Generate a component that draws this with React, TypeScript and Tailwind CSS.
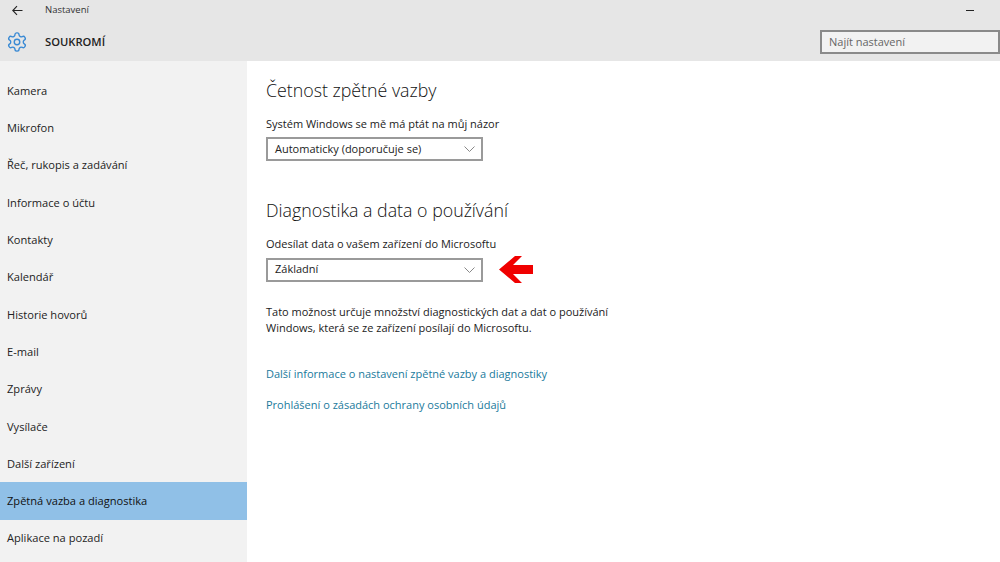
const menu = [
  "Kamera",
  "Mikrofon",
  "Řeč, rukopis a zadávání",
  "Informace o účtu",
  "Kontakty",
  "Kalendář",
  "Historie hovorů",
  "E-mail",
  "Zprávy",
  "Vysílače",
  "Další zařízení",
  "Zpětná vazba a diagnostika",
  "Aplikace na pozadí",
];

function Select({ label }: { label: string }) {
  return (
    <div className="flex h-[24px] w-[217px] items-center justify-between border-2 border-[#9a9a9a] bg-white pl-[7px] pr-[6px] text-[11px] text-[#222]">
      <span>{label}</span>
      <svg width="11" height="6" viewBox="0 0 11 6" fill="none" stroke="#888" strokeWidth="1">
        <path d="M0.5 0.5 L5.5 5.5 L10.5 0.5" />
      </svg>
    </div>
  );
}

export default function App() {
  return (
    <div className="flex h-[562px] w-[1000px] flex-col overflow-hidden bg-white font-['Open_Sans',sans-serif] text-[#222]">
      {/* hlavicka */}
      <header className="h-[61px] shrink-0 bg-[#e6e6e6]">
        <div className="flex h-[21px] items-center justify-between">
          <div className="flex items-center">
            <svg className="ml-[12px]" width="11" height="11" viewBox="0 0 11 11" fill="none" stroke="#222" strokeWidth="1.1">
              <path d="M10.5 5.5 H0.8 M5 1.2 L0.8 5.5 L5 9.8" />
            </svg>
            <span className="ml-[22px] text-[9.5px] text-[#333]">Nastavení</span>
          </div>
          <div className="mr-[26px] h-px w-[8px] bg-[#222]" />
        </div>
        <div className="flex h-[40px] items-start justify-between">
          <div className="flex h-[40px] items-center pt-[2px]">
            <svg className="ml-[6px]" width="22" height="22" viewBox="0 0 24 24" fill="none" stroke="#3a8ad4" strokeWidth="1.5" strokeLinejoin="round">
              <path d="M12.22 2h-.44a2 2 0 0 0-2 2v.18a2 2 0 0 1-1 1.73l-.43.25a2 2 0 0 1-2 0l-.15-.08a2 2 0 0 0-2.73.73l-.22.38a2 2 0 0 0 .73 2.73l.15.1a2 2 0 0 1 1 1.72v.51a2 2 0 0 1-1 1.74l-.15.09a2 2 0 0 0-.73 2.73l.22.38a2 2 0 0 0 2.73.73l.15-.08a2 2 0 0 1 2 0l.43.25a2 2 0 0 1 1 1.73V20a2 2 0 0 0 2 2h.44a2 2 0 0 0 2-2v-.18a2 2 0 0 1 1-1.73l.43-.25a2 2 0 0 1 2 0l.15.08a2 2 0 0 0 2.73-.73l.22-.39a2 2 0 0 0-.73-2.73l-.15-.08a2 2 0 0 1-1-1.74v-.5a2 2 0 0 1 1-1.74l.15-.09a2 2 0 0 0 .73-2.73l-.22-.38a2 2 0 0 0-2.73-.73l-.15.08a2 2 0 0 1-2 0l-.43-.25a2 2 0 0 1-1-1.73V4a2 2 0 0 0-2-2z" />
              <circle cx="12" cy="12" r="3" />
            </svg>
            <span className="ml-[17px] text-[11.2px] font-semibold text-[#222]">SOUKROMÍ</span>
          </div>
          <div className="mt-[9px] flex h-[24px] w-[180px] items-center border-2 border-[#8a8a8a] bg-[#f2f2f2] pl-[7px] text-[11px] text-[#666]">
            Najít nastavení
          </div>
        </div>
      </header>

      <div className="flex min-h-0 flex-1">
        {/* postranni menu */}
        <nav className="w-[247px] shrink-0 bg-[#f2f2f2] pt-[11px]">
          {menu.map((item) => (
            <div
              key={item}
              className={
                item === "Zpětná vazba a diagnostika"
                  ? "flex h-[37.3px] items-center bg-[#90c0e7] pl-[7px] pt-[1px] text-[11.1px] text-[#111]"
                  : "flex h-[37.3px] items-center pl-[7px] pt-[1px] text-[11.1px] text-[#222]"
              }
            >
              {item}
            </div>
          ))}
        </nav>

        {/* obsah */}
        <main className="flex-1 pl-[19px] pt-[16px]">
          <h2 className="text-[17.8px] font-light leading-[26px] text-[#111]">Četnost zpětné vazby</h2>
          <p className="mt-[13px] text-[11px] leading-[16px]">Systém Windows se mě má ptát na můj názor</p>
          <div className="mt-[5px]">
            <Select label="Automaticky (doporučuje se)" />
          </div>

          <h2 className="mt-[36px] text-[17.8px] font-light leading-[26px] text-[#111]">Diagnostika a data o používání</h2>
          <p className="mt-[13px] text-[11px] leading-[16px]">Odesílat data o vašem zařízení do Microsoftu</p>
          <div className="mt-[4px] flex items-center">
            <Select label="Základní" />
            <svg className="ml-[16px]" width="34" height="27" viewBox="0 0 34 27" fill="#f00000">
              <path d="M0 13.5 L16 0 L23 0 L14 9 L34 9 L34 18 L14 18 L23 27 L16 27 Z" />
            </svg>
          </div>

          <p className="mt-[21px] w-[360px] text-[11px] leading-[16px]">
            Tato možnost určuje množství diagnostických dat a dat o používání Windows, která se ze zařízení posílají do Microsoftu.
          </p>
          <p className="mt-[30px] text-[11px] leading-[16px] text-[#1a7a9c]">Další informace o nastavení zpětné vazby a diagnostiky</p>
          <p className="mt-[15px] text-[11px] leading-[16px] text-[#1a7a9c]">Prohlášení o zásadách ochrany osobních údajů</p>
        </main>
      </div>
    </div>
  );
}
